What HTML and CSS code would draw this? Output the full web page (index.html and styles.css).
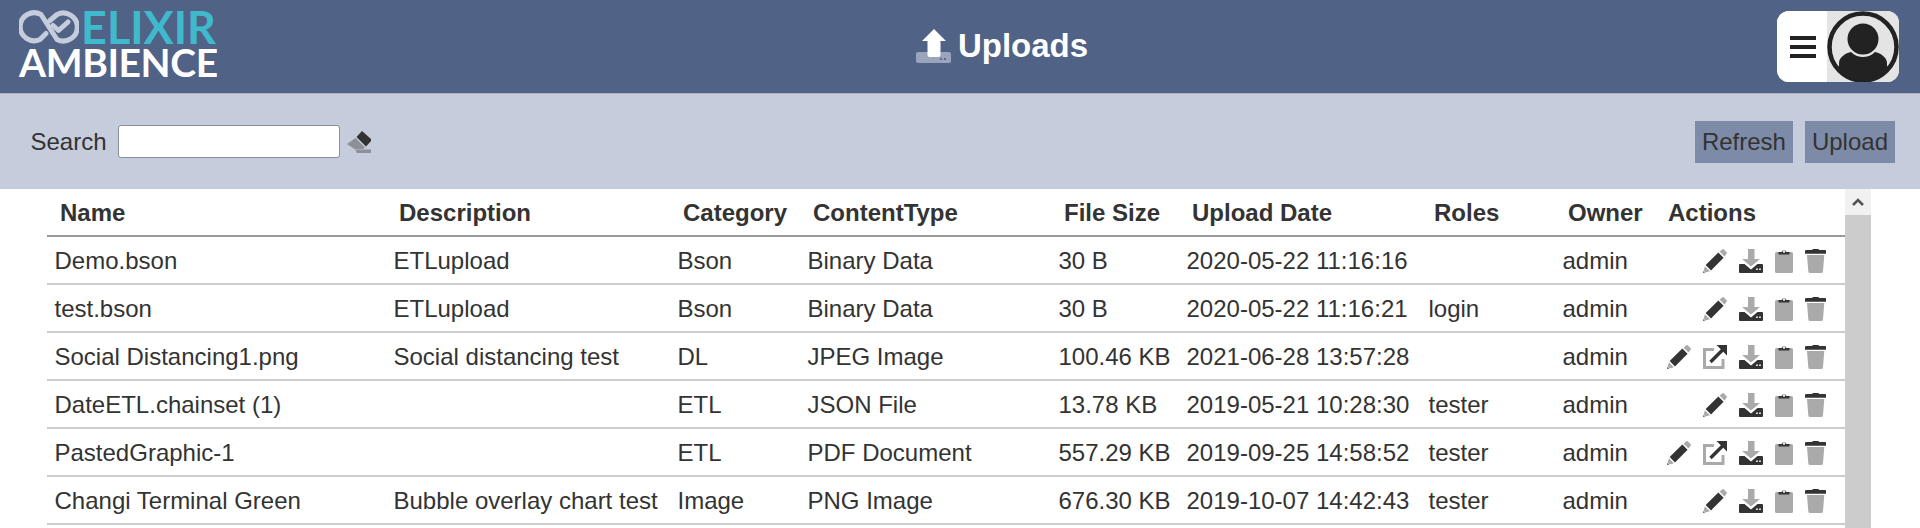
FILE: index.html
```html
<!DOCTYPE html>
<html lang="en">
<head>
<meta charset="utf-8">
<title>Uploads</title>
<link rel="stylesheet" href="styles.css">
</head>
<body>
<svg class="defs" width="0" height="0" aria-hidden="true">
  <symbol id="i-edit" viewBox="0 0 24 24">
    <path fill="#aaa" d="M19.500 .3a1 1 0 0 1 1.300 0l2.900 2.900a1 1 0 0 1 0 1.300L21.500 7.500 16.500 2.500Z"/>
    <path fill="#333" d="M15.300 3.500 20.600 8.800 8 21.400 2.700 16.100Z"/>
    <path fill="#aaa" d="M1.900 17.300 6.800 22.200 2.500 23.400.7 21.500Z"/>
    <path fill="#333" d="M.6 22 2 23.400 0 24Z"/>
  </symbol>
  <symbol id="i-open" viewBox="0 0 24 24">
    <path fill="none" stroke="#aaa" stroke-width="3" d="M11 4.500H1.500V22.500H20V14"/>
    <path fill="none" stroke="#333" stroke-width="3.400" d="M7.500 17 20 4.500"/>
    <path fill="#333" d="M13.500 0H24V10.500Z"/>
  </symbol>
  <symbol id="i-download" viewBox="0 0 24 24">
    <path fill="#aaa" d="M9 0h6.500v10H21l-9 7.500L3 10h6Z"/>
    <path fill="#333" d="M0 16a1 1 0 0 1 1-1h4.500l6.500 5.500 6.500-5.500H23a1 1 0 0 1 1 1v7a1 1 0 0 1-1 1H1a1 1 0 0 1-1-1Z"/>
    <path fill="#ddd" d="M17 19.500h2V21h-2ZM20 19.500h2V21h-2Z"/>
  </symbol>
  <symbol id="i-clip" viewBox="0 0 18 24">
    <path fill="#aaa" d="M1.500 3h15A1.500 1.500 0 0 1 18 4.500v18a1.500 1.500 0 0 1-1.500 1.500h-15A1.500 1.500 0 0 1 0 22.500v-18A1.500 1.500 0 0 1 1.500 3Z"/>
    <path fill="#333" fill-rule="evenodd" d="M3.500 5.500V3h3a2.700 2.700 0 0 1 5 0h3v2.500ZM9 1.500a1.300 1.300 0 1 0 .01 0Z"/>
  </symbol>
  <symbol id="i-trash" viewBox="0 0 21.300 24">
    <path fill="#333" d="M7 1 8 0h5.300l1 1H20a1.300 1.300 0 0 1 1.300 1.300V4.800H0V2.300A1.300 1.300 0 0 1 1.300 1Z"/>
    <path fill="#aaa" d="M2 6h17.300L18 22.500a1.700 1.700 0 0 1-1.700 1.500H5a1.700 1.700 0 0 1-1.700-1.500Z"/>
  </symbol>
</svg>

<header class="topbar">
  <div class="logo">
    <div class="logo-top">
      <svg class="logo-mark" viewBox="0 0 60 34" aria-hidden="true">
        <g fill="none" stroke="#c5ccdb" stroke-width="5" stroke-linecap="round" stroke-linejoin="round">
          <path d="M27 23.500 21 29.500A14 14 0 1 1 22 4.500L38 29.500A14 14 0 1 0 38 4.500L31 10.500"/>
          <path d="M34 15.500 39.500 20.500 49 12"/>
        </g>
      </svg>
      <span class="logo-elixir">ELIXIR</span>
    </div>
    <div class="logo-ambience">AMBIENCE</div>
  </div>
  <h1 class="title">
    <svg class="title-icon" viewBox="0 0 35 34" aria-hidden="true">
      <path fill="#9aa5bd" d="M2 23h31a2 2 0 0 1 2 2v7a2 2 0 0 1-2 2H2a2 2 0 0 1-2-2v-7a2 2 0 0 1 2-2Z"/>
      <path fill="#fff" d="M18 0 30 12H24.500V26a2 2 0 0 1-2 2H13.500a2 2 0 0 1-2-2V12H6Z"/>
      <path fill="#5a6a8c" d="M24 29h2v2h-2ZM28 29h2v2h-2Z"/>
    </svg>
    <span>Uploads</span>
  </h1>
  <div class="user">
    <button class="menu" type="button" aria-label="Menu"><span></span><span></span><span></span></button>
    <div class="avatar">
      <svg viewBox="0 0 72 72" aria-hidden="true">
        <circle cx="36" cy="36" r="33.500" fill="#e4e4e4" stroke="#222" stroke-width="4.500"/>
        <circle cx="36" cy="28" r="15.500" fill="#222"/>
        <path fill="#222" d="M12 60V52C12 46 19 42 24 41C28 45 32 46 36 46C40 46 44 45 48 41C53 42 60 46 60 52V60A33 33 0 0 1 12 60Z"/>
      </svg>
    </div>
  </div>
</header>

<section class="toolbar">
  <label class="search-label" for="search">Search</label>
  <input class="search-input" id="search" type="text">
  <svg class="eraser" viewBox="0 0 24 22" aria-hidden="true">
    <path fill="#333" d="M15 0 24 8 24 10 19 15.500 9.500 6Z"/>
    <path fill="#8d9097" d="M8.500 7 18 16.500 16 18H7.500L0 13Z"/>
    <path fill="#8d9097" d="M8 18.500H24V22H10Z"/>
  </svg>
  <div class="toolbar-actions">
    <button class="btn" type="button">Refresh</button>
    <button class="btn" type="button">Upload</button>
  </div>
</section>

<main class="content">
  <div class="table-wrap">
    <div class="head row">
      <div>Name</div><div>Description</div><div>Category</div><div>ContentType</div><div>File Size</div><div>Upload Date</div><div>Roles</div><div>Owner</div><div>Actions</div>
    </div>
    <div class="row">
      <div>Demo.bson</div><div>ETLupload</div><div>Bson</div><div>Binary Data</div><div>30 B</div><div>2020-05-22 11:16:16</div><div></div><div>admin</div>
      <div class="actions"><svg class="ic"><use href="#i-edit"/></svg><svg class="ic"><use href="#i-download"/></svg><svg class="ic ic-clip"><use href="#i-clip"/></svg><svg class="ic ic-trash"><use href="#i-trash"/></svg></div>
    </div>
    <div class="row">
      <div>test.bson</div><div>ETLupload</div><div>Bson</div><div>Binary Data</div><div>30 B</div><div>2020-05-22 11:16:21</div><div>login</div><div>admin</div>
      <div class="actions"><svg class="ic"><use href="#i-edit"/></svg><svg class="ic"><use href="#i-download"/></svg><svg class="ic ic-clip"><use href="#i-clip"/></svg><svg class="ic ic-trash"><use href="#i-trash"/></svg></div>
    </div>
    <div class="row">
      <div>Social Distancing1.png</div><div>Social distancing test</div><div>DL</div><div>JPEG Image</div><div>100.46 KB</div><div>2021-06-28 13:57:28</div><div></div><div>admin</div>
      <div class="actions"><svg class="ic"><use href="#i-edit"/></svg><svg class="ic"><use href="#i-open"/></svg><svg class="ic"><use href="#i-download"/></svg><svg class="ic ic-clip"><use href="#i-clip"/></svg><svg class="ic ic-trash"><use href="#i-trash"/></svg></div>
    </div>
    <div class="row">
      <div>DateETL.chainset (1)</div><div></div><div>ETL</div><div>JSON File</div><div>13.78 KB</div><div>2019-05-21 10:28:30</div><div>tester</div><div>admin</div>
      <div class="actions"><svg class="ic"><use href="#i-edit"/></svg><svg class="ic"><use href="#i-download"/></svg><svg class="ic ic-clip"><use href="#i-clip"/></svg><svg class="ic ic-trash"><use href="#i-trash"/></svg></div>
    </div>
    <div class="row">
      <div>PastedGraphic-1</div><div></div><div>ETL</div><div>PDF Document</div><div>557.29 KB</div><div>2019-09-25 14:58:52</div><div>tester</div><div>admin</div>
      <div class="actions"><svg class="ic"><use href="#i-edit"/></svg><svg class="ic"><use href="#i-open"/></svg><svg class="ic"><use href="#i-download"/></svg><svg class="ic ic-clip"><use href="#i-clip"/></svg><svg class="ic ic-trash"><use href="#i-trash"/></svg></div>
    </div>
    <div class="row">
      <div>Changi Terminal Green</div><div>Bubble overlay chart test</div><div>Image</div><div>PNG Image</div><div>676.30 KB</div><div>2019-10-07 14:42:43</div><div>tester</div><div>admin</div>
      <div class="actions"><svg class="ic"><use href="#i-edit"/></svg><svg class="ic"><use href="#i-download"/></svg><svg class="ic ic-clip"><use href="#i-clip"/></svg><svg class="ic ic-trash"><use href="#i-trash"/></svg></div>
    </div>
  </div>
  <div class="scrollbar">
    <div class="scroll-up">
      <svg viewBox="0 0 14 10" aria-hidden="true"><path fill="none" stroke="#555" stroke-width="2.600" d="M2 8 7 3 12 8"/></svg>
    </div>
    <div class="scroll-thumb"></div>
  </div>
</main>
</body>
</html>
```
FILE: styles.css
```css
* { box-sizing: border-box; }
html, body { margin: 0; height: 100%; overflow: hidden; background: #fff; }
body { font-family: "Liberation Sans", Arial, sans-serif; color: #333; font-size: 24px; }
.defs { display: block; height: 0; }

.topbar {
  height: 94px;
  background: #506285;
  border-bottom: 1px solid #a9afbd;
  display: grid;
  grid-template-columns: 1fr auto 1fr;
  align-items: center;
  padding: 0 21px 0 19px;
}
.logo { justify-self: start; align-self: start; width: 200px; margin-top: 7px; }
.logo-top { display: flex; align-items: center; height: 40px; gap: 2px; }
.logo-mark { width: 60px; height: 34px; flex: none; }
.logo-elixir { font-family: Lato, sans-serif; font-weight: 700; font-size: 45px; line-height: 40px; color: #3fb9cb; letter-spacing: 0; }
.logo-ambience { font-family: Lato, sans-serif; font-weight: 700; font-size: 39px; line-height: 38px; color: #fff; letter-spacing: -.4px; white-space: nowrap; margin-top: -4px; }

.title { margin: 0 0 2px 86px; display: flex; align-items: center; gap: 7px; color: #fff; font-size: 33px; font-weight: 700; }
.title-icon { width: 35px; height: 34px; }

.user { justify-self: end; display: flex; width: 122px; height: 71px; border-radius: 12px; overflow: hidden; background: #fff; }
.menu { width: 50px; flex: none; border: 0; background: #fff; padding: 0 0 0 13px; display: flex; flex-direction: column; justify-content: center; gap: 5px; }
.menu span { display: block; width: 26px; height: 4px; background: #222; }
.avatar { flex: 1; background: #e4e4e4; display: flex; align-items: center; justify-content: center; }
.avatar svg { width: 72px; height: 72px; display: block; flex: none; }

.toolbar {
  height: 95px;
  background: #c5ccdb;
  display: flex;
  align-items: center;
  padding: 0 25px 0 30.500px;
}
.search-label { font-size: 24px; }
.search-input { width: 222px; height: 33px; margin-left: 11.500px; border: 1px solid #8a8f98; border-radius: 3px; background: #fff; padding: 0 4px; }
.eraser { width: 24px; height: 22px; margin-left: 7px; }
.toolbar-actions { margin-left: auto; display: flex; gap: 12px; }
.btn { height: 42px; padding: 0 7px; border: 0; background: #7d8ba8; color: #333; font: 24px "Liberation Sans", Arial, sans-serif; }

.content { display: flex; padding-left: 47px; width: 1871px; }
.table-wrap { flex: 1; min-width: 0; }
.row {
  display: grid;
  grid-template-columns: 339px 284px 130px 251px 128px 242px 134px 100px 182.500px;
  height: 48px;
  align-items: center;
  border-bottom: 2px solid #ccc;
  padding: 2px 0 0 7.500px;
}
.row > div { white-space: nowrap; }
.head { border-bottom-color: #999; font-weight: 700; }
.head > div { padding-left: 5.500px; }
.actions { display: flex; justify-content: flex-end; align-items: center; gap: 12px; padding-right: 19px; }
.ic { width: 24px; height: 24px; flex: none; }
.ic-clip { width: 18px; }
.ic-trash { width: 21.3px; }

.scrollbar { width: 26px; flex: none; height: 339px; background: #ccc; }
.scroll-up { height: 26px; background: #f1f1f1; display: flex; align-items: center; justify-content: center; }
.scroll-up svg { width: 14px; height: 10px; }
.scroll-thumb { height: 100%; background: #ccc; }
```
